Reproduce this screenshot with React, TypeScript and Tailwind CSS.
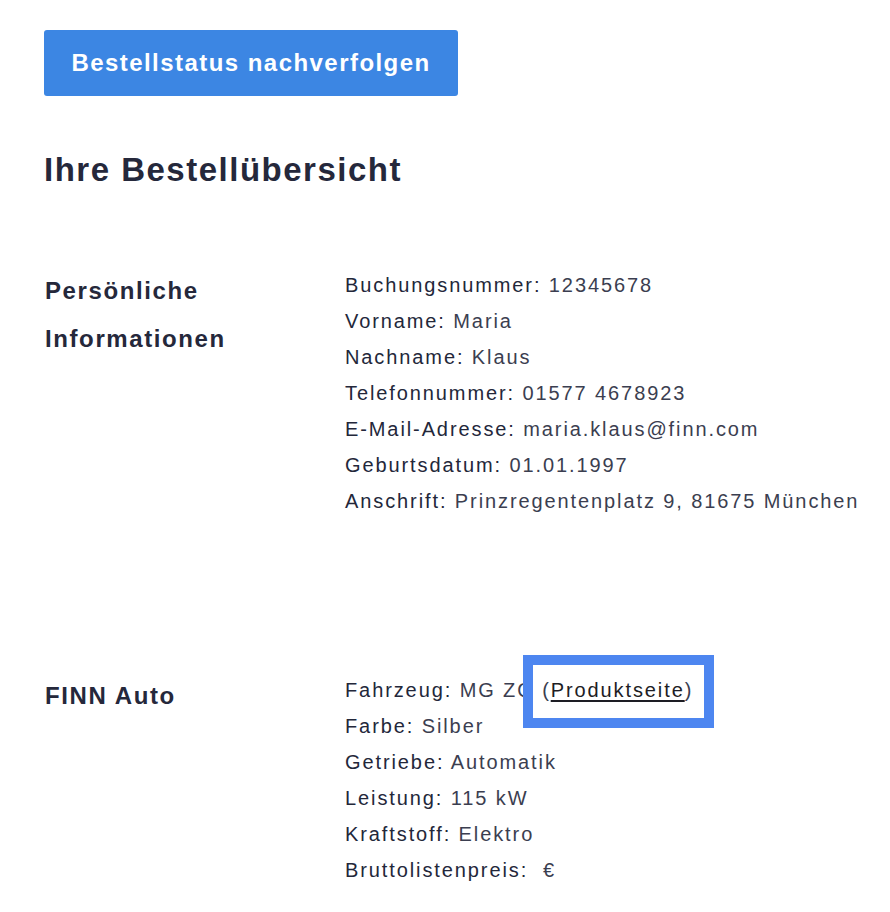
import React from "react";

const font = { fontFamily: '"Liberation Sans", Arial, sans-serif' };

function Row({ label, value }: { label: string; value: React.ReactNode }) {
  return (
    <div className="h-[36px] leading-[36px] whitespace-nowrap">
      <span className="text-[#23273a]">{label}:</span>{" "}
      <span className="text-[#3b3e50]">{value}</span>
    </div>
  );
}

export default function App() {
  return (
    <div className="min-h-[912px] bg-white pl-[44px] pt-[30px]" style={font}>
      <button className="h-[66px] w-[414px] rounded-[3px] bg-[#3c86e3] text-[24px] font-bold tracking-[1.45px] text-white">
        Bestellstatus nachverfolgen
      </button>

      <h1 className="mt-[54px] h-[40px] text-[33px] font-bold leading-[40px] tracking-[1.5px] text-[#25283b]">
        Ihre Bestellübersicht
      </h1>

      <div className="mt-[77px] flex">
        <div className="w-[301px] pl-[1px] text-[24px] font-bold leading-[48px] tracking-[1.6px] text-[#25283b]">
          Persönliche
          <br />
          Informationen
        </div>
        <div className="text-[20px] tracking-[1.9px]">
          <Row label="Buchungsnummer" value="12345678" />
          <Row label="Vorname" value="Maria" />
          <Row label="Nachname" value="Klaus" />
          <Row label="Telefonnummer" value="01577 4678923" />
          <Row label="E-Mail-Adresse" value="maria.klaus@finn.com" />
          <Row label="Geburtsdatum" value="01.01.1997" />
          <Row label="Anschrift" value="Prinzregentenplatz 9, 81675 München" />
        </div>
      </div>

      <div className="mt-[153px] flex">
        <div className="w-[301px] pl-[1px] text-[24px] font-bold leading-[48px] tracking-[1.6px] text-[#25283b]">
          FINN Auto
        </div>
        <div className="text-[20px] tracking-[1.9px]">
          <div className="h-[36px] leading-[36px] whitespace-nowrap">
            <span className="text-[#23273a]">Fahrzeug:</span>{" "}
            <span className="text-[#3b3e50]">MG ZO</span>{" "}
            <span className="relative inline-block">
              <span className="absolute left-[-19px] right-[-21px] top-[-17px] bottom-[-20px] border-[10px] border-[#4d86f0] bg-white"></span>
              <span className="relative text-[#3b3e50]">
                (<a className="text-[#1d1d24] underline decoration-2 underline-offset-[3px]">Produktseite</a>)
              </span>
            </span>
          </div>
          <Row label="Farbe" value="Silber" />
          <Row label="Getriebe" value="Automatik" />
          <Row label="Leistung" value="115 kW" />
          <Row label="Kraftstoff" value="Elektro" />
          <Row label="Bruttolistenpreis" value={"\u00a0€"} />
        </div>
      </div>
    </div>
  );
}
